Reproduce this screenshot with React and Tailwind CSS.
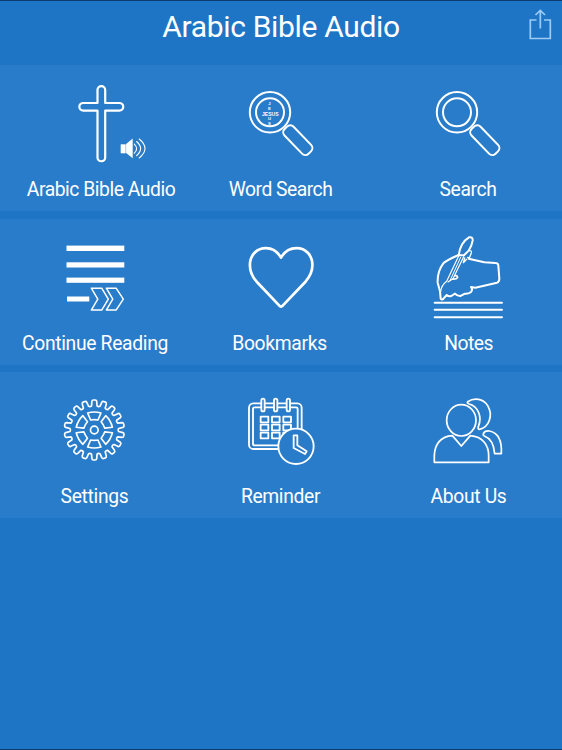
import React from "react";

const BG = "#297cc9";

// --- Icons ---

function IconFrame({ children }) {
  return (
    <svg
      viewBox="0 0 187 106"
      className="w-[187px] h-[106px]"
      fill="none"
      stroke="currentColor"
      strokeWidth="2"
      strokeLinejoin="round"
      strokeLinecap="round"
    >
      {children}
    </svg>
  );
}

function CrossIcon() {
  return (
    <IconFrame>
      <path
        strokeWidth="2.2"
        d="M97.5 38V25a3.85 3.85 0 0 1 7.7 0v13h14.2a3.85 3.85 0 0 1 0 7.7h-14.2v46.7a3.85 3.85 0 0 1-7.7 0V45.7H83.2a3.85 3.85 0 0 1 0-7.7z"
      />
      <path d="M120.7 79.3h5v9h-5z" fill="currentColor" stroke="none" />
      <path d="M126.100 79l6.600-5.600v19.800l-6.600-5.200z" fill="currentColor" stroke="none" />
      <g strokeWidth="1.1">
        <path d="M134.3 79.2q4.6 4.5 0 9" />
        <path d="M136.6 76.5q8 7 0 14.2" />
        <path d="M139.2 74q11.6 9.5 0 19" />
      </g>
    </IconFrame>
  );
}

function Magnifier({ children }) {
  return (
    <>
      <circle r="20.2" />
      <circle r="14" />
      <rect x="-17.2" y="-6.3" width="34.4" height="12.6" rx="4.6" transform="translate(27.8 27.9) rotate(46)" />
      {children}
    </>
  );
}

function WordSearchIcon() {
  return (
    <IconFrame>
      <g transform="translate(83 47.3)">
        <Magnifier>
          <g
            fill="currentColor"
            stroke="none"
            textAnchor="middle"
            fontFamily="'Liberation Sans', sans-serif"
            fontWeight="700"
          >
            <text x="0.3" y="3.2" fontSize="5.6" textLength="16.5" lengthAdjust="spacingAndGlyphs">JESUS</text>
            <g fontSize="4.2">
              <text x="-0.5" y="-7.2">J</text>
              <text x="-0.5" y="-2.400">E</text>
              <text x="-0.5" y="7.6">U</text>
              <text x="-0.5" y="12.4">S</text>
            </g>
          </g>
        </Magnifier>
      </g>
    </IconFrame>
  );
}

function SearchIcon() {
  return (
    <IconFrame>
      <g transform="translate(82 47.3)">
        <Magnifier />
      </g>
    </IconFrame>
  );
}

function ContinueIcon() {
  return (
    <IconFrame>
      <g fill="currentColor" stroke="none">
        <rect x="66.5" y="26.6" width="57.8" height="5.4" />
        <rect x="66.5" y="43.3" width="57.8" height="5.2" />
        <rect x="66.5" y="58.6" width="57.8" height="5.2" />
        <rect x="67" y="77.5" width="22.3" height="5" />
      </g>
      <g strokeWidth="1.5">
        <path d="M91.3 69.2h10.4l6.6 11-6.6 10.9H91.3l6.5-10.9z" />
        <path d="M106.3 69.2h9.8l7.2 11-7.2 10.9h-9.8l6.5-10.9z" />
      </g>
    </IconFrame>
  );
}

function HeartIcon() {
  return (
    <IconFrame>
      <path
        strokeWidth="2.7"
        d="M94 38.5C90 32 84 29.2 78.9 29.2C69.5 29.2 62.9 36.5 62.9 46C62.9 52 65 57.5 69.7 62.7L92.8 87.1Q94 88.2 95.2 87.1L118.5 62.7C123 57.5 125.4 52 125.4 46C125.4 36.5 119 29.2 109.4 29.2C104 29.2 98 32 94 38.5Z"
      />
    </IconFrame>
  );
}

function NotesIcon() {
  return (
    <IconFrame>
      <g transform="translate(45 9) scale(.3333)" strokeWidth="6">
        <path d="M118 80C105 86 84 93 70 106C58 122 52 142 53 164L60 190L62 212Q66 218 71 211L80 201Q87 207 94 204L105 197Q112 205 122 204L135 197Q145 198 153 192Q159 185 153 177L166 179L231 164Q238 161 238 152L235 112Q234 105 226 105L193 103L146 92" />
        <path d="M116 82C119 60 130 38 147 28Q159 25 158 38C156 52 151 60 146 68L132 82Z" />
        <path strokeWidth="4" d="M146 68Q156 66 154 75L148 90L143 88" />
        <path strokeWidth="3.5" d="M116 84L80 160Q64 172 62 191" />
        <path strokeWidth="3.5" d="M131 86L99 152L84 162" />
        <path strokeWidth="3" d="M122 88L90 158" />
        <path strokeWidth="4" d="M134 90L130 104L140 94" />
        <path strokeWidth="5" d="M98 153Q110 154 113 148Q112 142 105 143" />
        <path d="M44 224H246M44 245.5H246M44 267.5H246" />
      </g>
    </IconFrame>
  );
}

const TEETH = 18;

function polar(r, deg) {
  const a = ((deg - 90) * Math.PI) / 180;
  return `${(r * Math.cos(a)).toFixed(1)} ${(r * Math.sin(a)).toFixed(1)}`;
}

const gearPath =
  Array.from({ length: TEETH }, (_, i) => {
    const c = (i * 360) / TEETH;
    return `${i ? "L" : "M"}${polar(73, c - 6.5)}L${polar(86, c - 4.8)}Q${polar(90, c - 4.2)} ${polar(90, c - 1.8)}L${polar(90, c + 1.8)}Q${polar(90, c + 4.2)} ${polar(86, c + 4.8)}L${polar(73, c + 6.5)}Q${polar(70, c + 10)} ${polar(73, c + 13.5)}`;
  }).join("") + "Z";

function GearIcon() {
  return (
    <IconFrame>
      <g transform="translate(94.3 58) scale(.3333)" strokeWidth="5">
        <path d={gearPath} />
        <circle r="11.5" />
        {[0, 60, 120, 180, 240, 300].map((deg) => (
          <path key={deg} transform={`rotate(${deg})`} d="M-20 -51Q0 -57 20 -51L11 -30Q0 -32 -11 -30Z" />
        ))}
      </g>
    </IconFrame>
  );
}

function ReminderIcon() {
  return (
    <IconFrame>
      <g transform="translate(48 13) scale(.3333)" strokeWidth="5.5">
        <rect x="42" y="55" width="158" height="137" rx="13" />
        <rect x="54" y="67" width="134" height="114" rx="5" />
        {[84, 122, 160].map((x) => (
          <rect key={x} x={x - 5} y="41" width="10" height="38" rx="5" fill={BG} />
        ))}
        {[95, 119, 143].map((y) =>
          [77, 111, 145].map((x) => (
            <rect key={`${x}-${y}`} x={x} y={y} width="23" height="17" />
          ))
        )}
        <circle cx="183" cy="184" r="53" fill={BG} />
        <path d="M176 151H187V181L215 199L210 207L176 189Z" />
      </g>
    </IconFrame>
  );
}

function AboutIcon() {
  return (
    <IconFrame>
      <g transform="translate(45 13) scale(.3333)" strokeWidth="5.2">
        <ellipse cx="124" cy="106" rx="44" ry="47" />
        <path d="M43 232V212C44 178 62 154 97 152L124 183L151 152C188 155 206 180 206 212V232Z" />
        <path d="M143 50C162 38 190 40 203 62C220 90 208 127 178 133Q172 133 176 122C186 95 175 65 148 57Q140 54 143 50Z" />
        <path d="M190 146C194 138 200 137 208 138C235 143 246 170 244 206H224C222 180 212 160 193 153Q188 150 190 146Z" />
      </g>
    </IconFrame>
  );
}

function ShareIcon() {
  return (
    <svg viewBox="0 0 24 32" className="w-6 h-8" fill="none" stroke="#9ccbf5" strokeWidth="1.7">
      <path d="M8.500 11H2.300V29.500H22.300V11H16" />
      <path d="M12.300 19.500V1.500M7.500 6L12.300 1.500L17 6" />
    </svg>
  );
}

// --- Menu ---

const rows = [
  [
    { label: "Arabic Bible Audio", icon: CrossIcon, spacing: "tracking-[-0.45px] pl-[15px]" },
    { label: "Word Search", icon: WordSearchIcon, spacing: "tracking-[-0.5px]" },
    { label: "Search", icon: SearchIcon, spacing: "tracking-[-0.35px] pr-px" },
  ],
  [
    { label: "Continue Reading", icon: ContinueIcon, spacing: "tracking-[-0.32px] pl-[3px]" },
    { label: "Bookmarks", icon: HeartIcon, spacing: "tracking-[-0.32px] pr-[2px]" },
    { label: "Notes", icon: NotesIcon, spacing: "tracking-[-0.5px]" },
  ],
  [
    { label: "Settings", icon: GearIcon, spacing: "tracking-[-0.3px] pl-[2px]" },
    { label: "Reminder", icon: ReminderIcon, spacing: "tracking-[-0.35px]" },
    { label: "About Us", icon: AboutIcon, spacing: "tracking-[-0.35px]" },
  ],
];

function MenuItem({ label, icon: Icon, spacing }) {
  return (
    <button className="flex flex-col items-start cursor-pointer">
      <Icon />
      <span className={`w-[187px] text-center text-[19.3px] leading-[38px] whitespace-nowrap ${spacing}`}>
        {label}
      </span>
    </button>
  );
}

export default function App() {
  return (
    <div className="w-[562px] h-[750px] bg-[#1f75c5] border-y border-[#0c3b70] text-white font-['Roboto',sans-serif] flex flex-col overflow-hidden">
      {/* Header */}
      <header className="h-16 shrink-0 grid grid-cols-[1fr_auto_1fr] items-start">
        <h1 className="col-start-2 pt-2 text-[30px] leading-9 tracking-[-0.33px] whitespace-nowrap">
          Arabic Bible Audio
        </h1>
        <button className="justify-self-end mr-[10px] mt-2 cursor-pointer">
          <ShareIcon />
        </button>
      </header>

      {/* Icon grid */}
      <main className="flex flex-col gap-[7.5px]">
        {rows.map((row, i) => (
          <section key={i} className="h-[146px] grid grid-cols-[187px_188px_187px] bg-[#297cc9]">
            {row.map((item) => (
              <MenuItem key={item.label} {...item} />
            ))}
          </section>
        ))}
      </main>
    </div>
  );
}
